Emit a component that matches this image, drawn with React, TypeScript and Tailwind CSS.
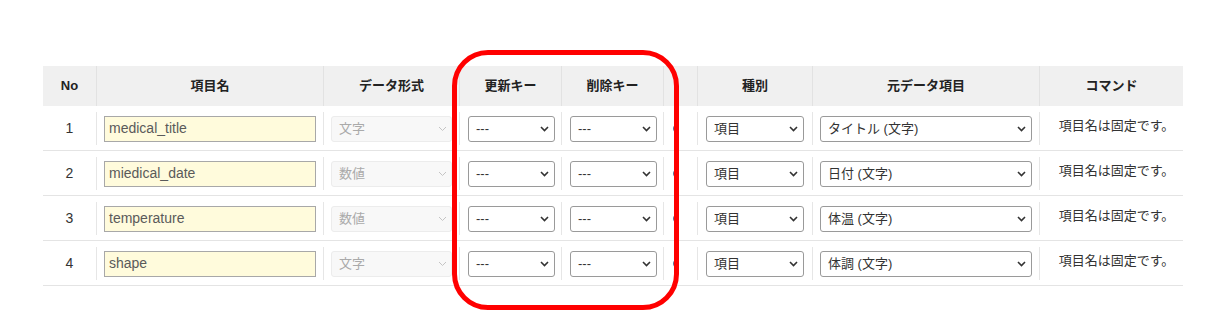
import React from "react"

const rows = [
  { no: 1, name: "medical_title", type: "文字", src: "タイトル (文字)" },
  { no: 2, name: "miedical_date", type: "数値", src: "日付 (文字)" },
  { no: 3, name: "temperature", type: "数値", src: "体温 (文字)" },
  { no: 4, name: "shape", type: "文字", src: "体調 (文字)" },
]

const cols = "grid grid-cols-[53px_227px_136px_102px_102px_34px_115px_227px_144px]"

// Chevron used in the select boxes
const Chevron = ({ light = false }: { light?: boolean }) => (
  <svg width="9" height="6" viewBox="0 0 9 6" className="shrink-0">
    <path
      d="M1 1 L4.5 4.5 L8 1"
      fill="none"
      stroke={light ? "#c4c4c4" : "#333"}
      strokeWidth={light ? 1 : 1.6}
    />
  </svg>
)

const Select = ({ value, className = "" }: { value: string; className?: string }) => (
  <div
    className={`h-[26px] flex items-center justify-between pl-[7px] pr-[5px] bg-white border border-[#9a9a9a] rounded-[3px] text-[13px] text-[#333] ${className}`}
  >
    <span>{value}</span>
    <Chevron />
  </div>
)

const HeadCell = ({ children, first = false }: { children?: React.ReactNode; first?: boolean }) => (
  <div
    className={`h-[40px] flex items-center justify-center font-bold text-[13px] text-[#222] ${first ? "" : "border-l border-[#e2e2e2]"}`}
  >
    {children}
  </div>
)

const Cell = ({ children, first = false, className = "" }: { children?: React.ReactNode; first?: boolean; className?: string }) => (
  <div className={`h-[33px] mt-[6px] mb-[5px] flex ${first ? "" : "border-l border-[#e6e6e6]"} ${className}`}>
    {children}
  </div>
)

export default function App() {
  return (
    <div
      className="relative w-[1231px] h-[322px] bg-white pt-[66px] pl-[43px]"
      style={{ fontFamily: '"Liberation Sans", "Noto Sans CJK JP", sans-serif' }}
    >
      <div className="w-[1140px]">
        <div className={`${cols} bg-[#f0f0f0]`}>
          <HeadCell first>No</HeadCell>
          <HeadCell>項目名</HeadCell>
          <HeadCell>データ形式</HeadCell>
          <HeadCell>更新キー</HeadCell>
          <HeadCell>削除キー</HeadCell>
          <HeadCell />
          <HeadCell>種別</HeadCell>
          <HeadCell>元データ項目</HeadCell>
          <HeadCell>コマンド</HeadCell>
        </div>
        {rows.map((r) => (
          <div key={r.no} className={`${cols} border-b border-[#e4e4e4]`}>
            <Cell first className="items-center justify-center text-[14px] text-[#333]">
              {r.no}
            </Cell>
            <Cell className="items-center pl-[7px]">
              <div className="w-[212px] h-[26px] flex items-center pl-[4px] bg-[#fffbdc] border border-[#a8a8a8] text-[14px] text-[#5a5a5a]">
                {r.name}
              </div>
            </Cell>
            <Cell className="items-center pl-[7px]">
              <div className="w-[121px] h-[26px] flex items-center justify-between pl-[7px] pr-[4px] bg-[#f8f8f8] border border-[#ececec] rounded-[3px] text-[13px] text-[#aaa]">
                <span>{r.type}</span>
                <Chevron light />
              </div>
            </Cell>
            <Cell className="items-center pl-[8px]">
              <Select value="---" className="w-[87px]" />
            </Cell>
            <Cell className="items-center pl-[8px]">
              <Select value="---" className="w-[87px]" />
            </Cell>
            <Cell className="items-center pl-[9px]">
              <div className="w-[6px] h-[7px] bg-[#5b7394] rounded-l-full" />
            </Cell>
            <Cell className="items-center pl-[8px]">
              <Select value="項目" className="w-[98px]" />
            </Cell>
            <Cell className="items-center pl-[7px]">
              <Select value={r.src} className="w-[212px] rounded-[2px]" />
            </Cell>
            <Cell className="items-start justify-center pt-[4px] pl-[10px] text-[13px] text-[#333]">
              項目名は固定です。
            </Cell>
          </div>
        ))}
      </div>
      {/* red annotation */}
      <div className="absolute left-[452px] top-[50px] w-[227px] h-[260px] border-[5px] border-[#ff0000] rounded-[36px]" />
    </div>
  )
}
